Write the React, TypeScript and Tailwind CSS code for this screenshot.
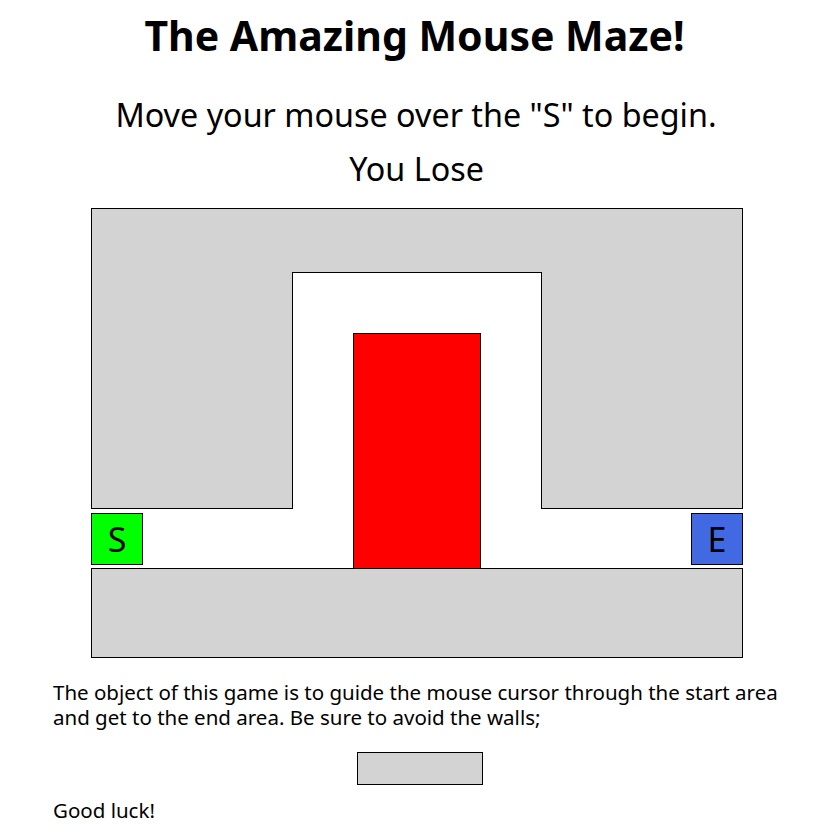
import React from "react";

const font = { fontFamily: '"Noto Sans", "Open Sans", sans-serif' };

export default function App() {
  return (
    <div className="w-[829px] h-[832px] bg-white text-black overflow-hidden" style={font}>
      <h1 className="text-center text-[41px] font-bold leading-[50px] pt-[10px] h-[92px]">
        The Amazing Mouse Maze!
      </h1>
      <div className="text-center text-[32.3px] leading-[44px] h-[54px] pl-[3px]">
        Move your mouse over the "S" to begin.
      </div>
      <div className="text-center text-[32.3px] leading-[44px] h-[62px] pl-[4px]">You Lose</div>
      <div className="pl-[91px]">
        <div className="relative w-[652px] h-[450px]">
          <div className="absolute left-0 top-0 w-[652px] h-[301px] bg-[#d3d3d3] border border-black box-border" />
          <div className="absolute left-[201px] top-[64px] w-[250px] h-[237px] bg-white border-l border-t border-r border-black box-border" />
          <div className="absolute left-[262px] top-[125px] w-[128px] h-[236px] bg-[#ff0000] border border-black box-border" />
          <div className="absolute left-0 top-[305px] w-[52px] h-[52px] bg-[#00ff00] border border-black box-border flex items-center justify-center text-[34px] leading-none">
            S
          </div>
          <div className="absolute left-[600px] top-[305px] w-[52px] h-[52px] bg-[#4169e1] border border-black box-border flex items-center justify-center text-[34px] leading-none">
            E
          </div>
          <div className="absolute left-0 top-[360px] w-[652px] h-[90px] bg-[#d3d3d3] border border-black box-border" />
        </div>
      </div>
      <p className="ml-[53px] w-[740px] pt-[22px] text-[20.5px] leading-[25px]">
        The object of this game is to guide the mouse cursor through the start area and get to the end area. Be sure to avoid the walls;
      </p>
      <div className="flex justify-center pt-[22px] pl-[11px]">
        <div className="w-[126px] h-[33px] bg-[#d3d3d3] border border-black box-border" />
      </div>
      <p className="px-[53px] pt-[13px] text-[20.5px] leading-[25px]">Good luck!</p>
    </div>
  );
}
